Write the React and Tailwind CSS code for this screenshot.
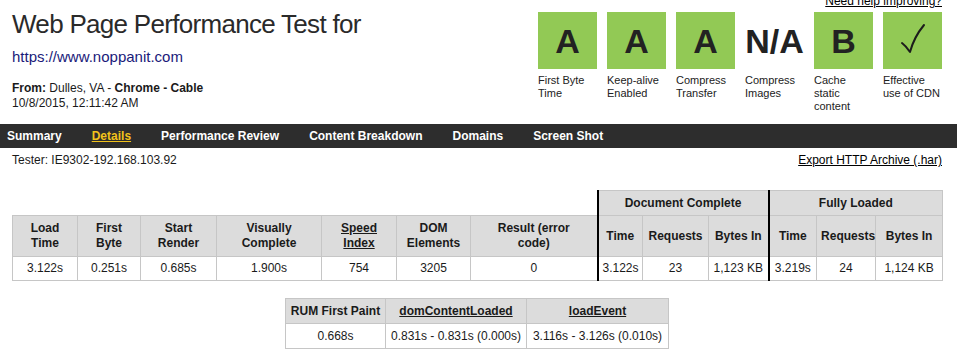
import React from "react";

// grades shown at the top right
const grades = [
  { grade: "A", label: ["First Byte", "Time"] },
  { grade: "A", label: ["Keep-alive", "Enabled"] },
  { grade: "A", label: ["Compress", "Transfer"] },
  { grade: "N/A", label: ["Compress", "Images"], plain: true },
  { grade: "B", label: ["Cache", "static", "content"] },
  { grade: "check", label: ["Effective", "use of CDN"] },
];

const tabs = ["Summary", "Details", "Performance Review", "Content Breakdown", "Domains", "Screen Shot"];

const cell = "border border-[#c6c6c6] text-center align-middle px-1 py-0";
const head = cell + " bg-[#dcdcdc] font-bold";
const thick = " border-l-2 border-l-black";

const GradeBox = ({ item }) => (
  <div className="w-[59px]">
    <div
      className={
        "h-[57px] flex items-center justify-center text-[34px] font-bold text-[#222] leading-none " +
        (item.plain ? "" : "bg-[#92c955]")
      }
    >
      {item.grade === "check" ? (
        <svg width="59" height="57" viewBox="0 0 59 57">
          <path d="M19 31 Q23 34 27 40 Q31 25 41 13" fill="none" stroke="#1c1c1c" strokeWidth="2" strokeLinecap="round" strokeLinejoin="round" />
        </svg>
      ) : (
        item.grade
      )}
    </div>
    <div className="mt-[5px] text-[11px] leading-[13px] text-[#222]">
      {item.label.map((l) => (
        <div key={l}>{l}</div>
      ))}
    </div>
  </div>
);

export default function App() {
  return (
    <div className="w-[957px] h-[364px] overflow-hidden bg-white text-[#1a1a1a] font-['Liberation_Sans',Arial,sans-serif]">
      {/* header */}
      <div className="h-[124px] flex justify-between pl-[12px] pr-[15px]">
        <div>
          <h1 className="mt-[9px] text-[26px] leading-[30px] tracking-[-0.7px] text-[#2a2a2a]">Web Page Performance Test for</h1>
          <div className="mt-[9px] text-[15px] leading-[18px] text-[#1a1a7a]">https://www.noppanit.com</div>
          <div className="mt-[15px] text-[12px] leading-[15px]">
            <div>
              <b>From:</b> Dulles, VA - <b>Chrome - Cable</b>
            </div>
            <div>10/8/2015, 12:11:42 AM</div>
          </div>
        </div>
        <div className="flex flex-col items-end">
          <a className="-mt-[6px] h-[14px] text-[12px] leading-[14px] underline text-black">Need help improving?</a>
          <div className="mt-[4px] flex gap-[10px]">
            {grades.map((g, i) => (
              <GradeBox key={i} item={g} />
            ))}
          </div>
        </div>
      </div>

      {/* tabs */}
      <div className="h-[24px] bg-[#2d2d2d] flex items-center gap-[30px] pl-[7px] text-[12px] font-bold text-white">
        {tabs.map((t) => (
          <span key={t} className={t === "Details" ? "text-[#f2c21b] underline" : ""}>
            {t}
          </span>
        ))}
      </div>

      <div className="mt-[5px] flex justify-between pl-[12px] pr-[15px] text-[12px] leading-[14px]">
        <span>Tester: IE9302-192.168.103.92</span>
        <a className="underline text-black">Export HTTP Archive (.har)</a>
      </div>

      {/* main results */}
      <table className="mt-[23px] ml-[12px] w-[930px] table-fixed border-collapse text-[12px] leading-[15px]">
        <colgroup>
          {[65, 63, 76, 105, 75, 74, 127, 45, 66, 60, 48, 59, 67].map((w, i) => (
            <col key={i} style={{ width: w }} />
          ))}
        </colgroup>
        <tbody>
          <tr className="h-[25px]">
            <td colSpan={7} className="border-0"></td>
            <td colSpan={3} className={head + thick}>Document Complete</td>
            <td colSpan={3} className={head + thick}>Fully Loaded</td>
          </tr>
          <tr className="h-[41px]">
            <td className={head}>Load<br />Time</td>
            <td className={head}>First<br />Byte</td>
            <td className={head}>Start<br />Render</td>
            <td className={head}>Visually<br />Complete</td>
            <td className={head}><span className="underline">Speed<br />Index</span></td>
            <td className={head}>DOM<br />Elements</td>
            <td className={head}>Result (error<br />code)</td>
            <td className={head + thick}>Time</td>
            <td className={head}>Requests</td>
            <td className={head}>Bytes In</td>
            <td className={head + thick}>Time</td>
            <td className={head}>Requests</td>
            <td className={head}>Bytes In</td>
          </tr>
          <tr className="h-[24px]">
            <td className={cell}>3.122s</td>
            <td className={cell}>0.251s</td>
            <td className={cell}>0.685s</td>
            <td className={cell}>1.900s</td>
            <td className={cell}>754</td>
            <td className={cell}>3205</td>
            <td className={cell}>0</td>
            <td className={cell + thick}>3.122s</td>
            <td className={cell}>23</td>
            <td className={cell}>1,123 KB</td>
            <td className={cell + thick}>3.219s</td>
            <td className={cell}>24</td>
            <td className={cell}>1,124 KB</td>
          </tr>
        </tbody>
      </table>

      {/* RUM timings */}
      <table className="mt-[17px] ml-[285px] w-[383px] table-fixed border-collapse text-[12px] leading-[15px]">
        <colgroup>
          <col style={{ width: 100 }} />
          <col style={{ width: 141 }} />
          <col style={{ width: 142 }} />
        </colgroup>
        <tbody>
          <tr className="h-[25px]">
            <td className={head}>RUM First Paint</td>
            <td className={head}><span className="underline">domContentLoaded</span></td>
            <td className={head}><span className="underline">loadEvent</span></td>
          </tr>
          <tr className="h-[25px]">
            <td className={cell}>0.668s</td>
            <td className={cell}>0.831s - 0.831s (0.000s)</td>
            <td className={cell}>3.116s - 3.126s (0.010s)</td>
          </tr>
        </tbody>
      </table>
    </div>
  );
}
